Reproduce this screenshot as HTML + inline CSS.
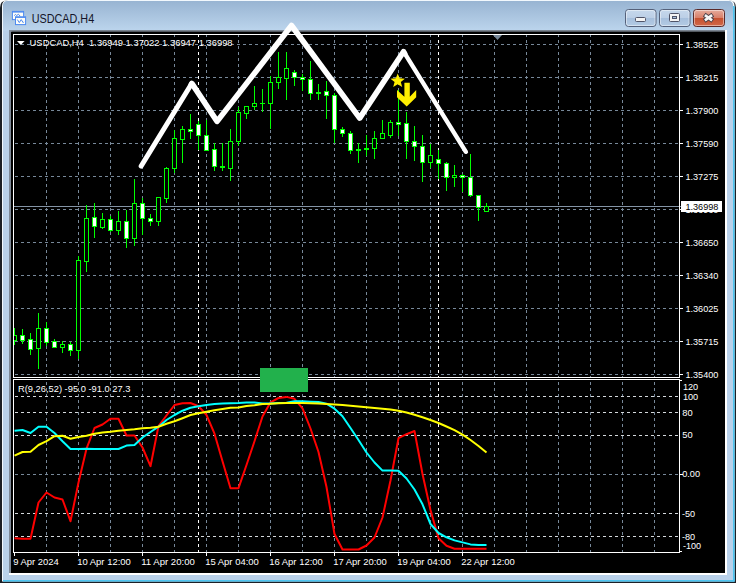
<!DOCTYPE html>
<html><head><meta charset="utf-8"><title>USDCAD,H4</title>
<style>
html,body{margin:0;padding:0;background:#fff;}
body{width:737px;height:583px;overflow:hidden;font-family:"Liberation Sans",sans-serif;}
svg{display:block}
text{font-family:"Liberation Sans",sans-serif;}
.t{font-size:9.8px;fill:#fff}
</style></head><body>
<svg width="737" height="583" viewBox="0 0 737 583">
<defs>
<linearGradient id="tb" gradientUnits="userSpaceOnUse" x1="0" y1="1" x2="0" y2="30"><stop offset="0" stop-color="#98b4d2"/><stop offset="1" stop-color="#bbd4ec"/></linearGradient>
<linearGradient id="bt" x1="0" y1="0" x2="0" y2="1"><stop offset="0" stop-color="#c6d8ec"/><stop offset="0.48" stop-color="#bccfe6"/><stop offset="0.5" stop-color="#a6bfdc"/><stop offset="1" stop-color="#b4cbe4"/></linearGradient>
<linearGradient id="cl" x1="0" y1="0" x2="0" y2="1"><stop offset="0" stop-color="#e6ae9f"/><stop offset="0.48" stop-color="#d9806a"/><stop offset="0.5" stop-color="#c5502f"/><stop offset="1" stop-color="#d2694a"/></linearGradient>
<linearGradient id="sh" x1="0" y1="0" x2="0" y2="1"><stop offset="0" stop-color="#8e9aa8"/><stop offset="1" stop-color="#1a1a1a"/></linearGradient>
<clipPath id="cm"><rect x="14" y="35" width="665" height="342"/></clipPath>
<clipPath id="ci"><rect x="14" y="380" width="665" height="172"/></clipPath>
</defs>

<rect x="0" y="0" width="737" height="583" fill="#fff"/>
<path d="M0 583 V7.5 Q0 0.5 7 0.5 H729 Q736 0.5 736 7.5 V583 Z" fill="#1c2026"/>
<path d="M2 581.6 V6 Q2 0 8 0 H728.6 Q734.6 0 734.6 6 V581.6 Z" fill="#f2f8fd"/>
<rect x="730" y="6" width="4.6" height="575.6" fill="#4cc4f0"/>
<rect x="3" y="577" width="731.6" height="4.6" fill="#4cc4f0"/>
<path d="M3 580 V6 Q3 1 8 1 H728 Q733 1 733 6 V580 Z" fill="#b9d1ea"/>
<path d="M3 31 V6 Q3 1 8 1 H728 Q733 1 733 6 V31 Z" fill="url(#tb)"/>
<rect x="9" y="30" width="718" height="545" fill="#fff"/>
<rect x="9" y="30" width="716" height="3" fill="url(#sh)"/>
<rect x="9" y="30" width="2.5" height="543" fill="#7d8896"/>
<rect x="11" y="32" width="714" height="541" fill="#000"/>
<rect x="12.4" y="11.4" width="11.2" height="8.2" fill="#fffef8" stroke="#4d8af0" stroke-width="1"/>
<rect x="12.4" y="11.4" width="11.2" height="1.2" fill="#4d8af0"/>
<polyline points="14.2,15.6 15.6,14.4 16.6,15.6 18.4,14.2 20.2,16.2" fill="none" stroke="#4d8af0" stroke-width="1"/>
<rect x="15.5" y="16.8" width="10.1" height="7.8" fill="#fffef8" stroke="#4d8af0" stroke-width="1"/>
<rect x="15.5" y="16.8" width="10.1" height="1.1" fill="#4d8af0"/>
<polyline points="17.4,19.6 19.3,22.6 21.2,19.6 23.2,22.6 23.8,21.8" fill="none" stroke="#4d8af0" stroke-width="1"/>
<text x="31.7" y="22.8" font-size="12" fill="#141428" textLength="62.5" lengthAdjust="spacingAndGlyphs">USDCAD,H4</text>
<rect x="625.5" y="9.5" width="30.5" height="17" rx="3" ry="3" fill="url(#bt)" stroke="#55617a" stroke-width="1"/>
<rect x="626.5" y="10.5" width="28.5" height="15" rx="2" ry="2" fill="none" stroke="#ffffff" stroke-opacity="0.45" stroke-width="1"/>
<rect x="659.5" y="9.5" width="30.5" height="17" rx="3" ry="3" fill="url(#bt)" stroke="#55617a" stroke-width="1"/>
<rect x="660.5" y="10.5" width="28.5" height="15" rx="2" ry="2" fill="none" stroke="#ffffff" stroke-opacity="0.45" stroke-width="1"/>
<rect x="693.5" y="9.5" width="31" height="17" rx="3" ry="3" fill="url(#cl)" stroke="#5a2a2a" stroke-width="1"/>
<rect x="694.5" y="10.5" width="29" height="15" rx="2" ry="2" fill="none" stroke="#ffffff" stroke-opacity="0.45" stroke-width="1"/>
<rect x="635.5" y="17.5" width="10" height="4" rx="1" fill="#f4f4f4" stroke="#505468" stroke-width="1"/>
<rect x="669.5" y="13.5" width="10" height="8" rx="1" fill="#f4f4f4" stroke="#505468" stroke-width="1"/>
<rect x="672.5" y="16.5" width="4" height="2" fill="#a9c1de" stroke="#505468" stroke-width="1"/>
<path d="M704.2 14.6 L712.8 20.8 M712.8 14.6 L704.2 20.8" stroke="#4a4048" stroke-width="4.6" stroke-linecap="butt" fill="none"/>
<path d="M704.9 15.1 L712.1 20.3 M712.1 15.1 L704.9 20.3" stroke="#f6f6f6" stroke-width="2.7" stroke-linecap="butt" fill="none"/>
<g shape-rendering="crispEdges">
<line x1="15" y1="44.5" x2="679" y2="44.5" stroke="#778899" stroke-width="1" stroke-dasharray="3 3"/>
<line x1="15" y1="77.5" x2="679" y2="77.5" stroke="#778899" stroke-width="1" stroke-dasharray="3 3"/>
<line x1="15" y1="110.5" x2="679" y2="110.5" stroke="#778899" stroke-width="1" stroke-dasharray="3 3"/>
<line x1="15" y1="143.5" x2="679" y2="143.5" stroke="#778899" stroke-width="1" stroke-dasharray="3 3"/>
<line x1="15" y1="176.5" x2="679" y2="176.5" stroke="#778899" stroke-width="1" stroke-dasharray="3 3"/>
<line x1="15" y1="209.5" x2="679" y2="209.5" stroke="#778899" stroke-width="1" stroke-dasharray="3 3"/>
<line x1="15" y1="242.5" x2="679" y2="242.5" stroke="#778899" stroke-width="1" stroke-dasharray="3 3"/>
<line x1="15" y1="275.5" x2="679" y2="275.5" stroke="#778899" stroke-width="1" stroke-dasharray="3 3"/>
<line x1="15" y1="308.5" x2="679" y2="308.5" stroke="#778899" stroke-width="1" stroke-dasharray="3 3"/>
<line x1="15" y1="341.5" x2="679" y2="341.5" stroke="#778899" stroke-width="1" stroke-dasharray="3 3"/>
<line x1="15" y1="374.5" x2="679" y2="374.5" stroke="#778899" stroke-width="1" stroke-dasharray="3 3"/>
<line x1="46.5" y1="34" x2="46.5" y2="377" stroke="#778899" stroke-width="1" stroke-dasharray="3 3" stroke-dashoffset="0"/>
<line x1="46.5" y1="382" x2="46.5" y2="552" stroke="#778899" stroke-width="1" stroke-dasharray="3 3" stroke-dashoffset="0"/>
<line x1="78.5" y1="34" x2="78.5" y2="377" stroke="#778899" stroke-width="1" stroke-dasharray="3 3" stroke-dashoffset="0"/>
<line x1="78.5" y1="382" x2="78.5" y2="552" stroke="#778899" stroke-width="1" stroke-dasharray="3 3" stroke-dashoffset="0"/>
<line x1="110.5" y1="34" x2="110.5" y2="377" stroke="#778899" stroke-width="1" stroke-dasharray="3 3" stroke-dashoffset="0"/>
<line x1="110.5" y1="382" x2="110.5" y2="552" stroke="#778899" stroke-width="1" stroke-dasharray="3 3" stroke-dashoffset="0"/>
<line x1="142.5" y1="34" x2="142.5" y2="377" stroke="#778899" stroke-width="1" stroke-dasharray="3 3" stroke-dashoffset="0"/>
<line x1="142.5" y1="382" x2="142.5" y2="552" stroke="#778899" stroke-width="1" stroke-dasharray="3 3" stroke-dashoffset="0"/>
<line x1="174.5" y1="34" x2="174.5" y2="377" stroke="#778899" stroke-width="1" stroke-dasharray="3 3" stroke-dashoffset="0"/>
<line x1="174.5" y1="382" x2="174.5" y2="552" stroke="#778899" stroke-width="1" stroke-dasharray="3 3" stroke-dashoffset="0"/>
<line x1="206.5" y1="34" x2="206.5" y2="377" stroke="#778899" stroke-width="1" stroke-dasharray="3 3" stroke-dashoffset="0"/>
<line x1="206.5" y1="382" x2="206.5" y2="552" stroke="#778899" stroke-width="1" stroke-dasharray="3 3" stroke-dashoffset="0"/>
<line x1="238.5" y1="34" x2="238.5" y2="377" stroke="#778899" stroke-width="1" stroke-dasharray="3 3" stroke-dashoffset="0"/>
<line x1="238.5" y1="382" x2="238.5" y2="552" stroke="#778899" stroke-width="1" stroke-dasharray="3 3" stroke-dashoffset="0"/>
<line x1="270.5" y1="34" x2="270.5" y2="377" stroke="#778899" stroke-width="1" stroke-dasharray="3 3" stroke-dashoffset="0"/>
<line x1="270.5" y1="382" x2="270.5" y2="552" stroke="#778899" stroke-width="1" stroke-dasharray="3 3" stroke-dashoffset="0"/>
<line x1="302.5" y1="34" x2="302.5" y2="377" stroke="#778899" stroke-width="1" stroke-dasharray="3 3" stroke-dashoffset="0"/>
<line x1="302.5" y1="382" x2="302.5" y2="552" stroke="#778899" stroke-width="1" stroke-dasharray="3 3" stroke-dashoffset="0"/>
<line x1="334.5" y1="34" x2="334.5" y2="377" stroke="#778899" stroke-width="1" stroke-dasharray="3 3" stroke-dashoffset="0"/>
<line x1="334.5" y1="382" x2="334.5" y2="552" stroke="#778899" stroke-width="1" stroke-dasharray="3 3" stroke-dashoffset="0"/>
<line x1="366.5" y1="34" x2="366.5" y2="377" stroke="#778899" stroke-width="1" stroke-dasharray="3 3" stroke-dashoffset="0"/>
<line x1="366.5" y1="382" x2="366.5" y2="552" stroke="#778899" stroke-width="1" stroke-dasharray="3 3" stroke-dashoffset="0"/>
<line x1="398.5" y1="34" x2="398.5" y2="377" stroke="#778899" stroke-width="1" stroke-dasharray="3 3" stroke-dashoffset="0"/>
<line x1="398.5" y1="382" x2="398.5" y2="552" stroke="#778899" stroke-width="1" stroke-dasharray="3 3" stroke-dashoffset="0"/>
<line x1="430.5" y1="34" x2="430.5" y2="377" stroke="#778899" stroke-width="1" stroke-dasharray="3 3" stroke-dashoffset="0"/>
<line x1="430.5" y1="382" x2="430.5" y2="552" stroke="#778899" stroke-width="1" stroke-dasharray="3 3" stroke-dashoffset="0"/>
<line x1="462.5" y1="34" x2="462.5" y2="377" stroke="#778899" stroke-width="1" stroke-dasharray="3 3" stroke-dashoffset="0"/>
<line x1="462.5" y1="382" x2="462.5" y2="552" stroke="#778899" stroke-width="1" stroke-dasharray="3 3" stroke-dashoffset="0"/>
<line x1="494.5" y1="34" x2="494.5" y2="377" stroke="#778899" stroke-width="1" stroke-dasharray="3 3" stroke-dashoffset="0"/>
<line x1="494.5" y1="382" x2="494.5" y2="552" stroke="#778899" stroke-width="1" stroke-dasharray="3 3" stroke-dashoffset="0"/>
<line x1="526.5" y1="34" x2="526.5" y2="377" stroke="#778899" stroke-width="1" stroke-dasharray="3 3" stroke-dashoffset="0"/>
<line x1="526.5" y1="382" x2="526.5" y2="552" stroke="#778899" stroke-width="1" stroke-dasharray="3 3" stroke-dashoffset="0"/>
<line x1="558.5" y1="34" x2="558.5" y2="377" stroke="#778899" stroke-width="1" stroke-dasharray="3 3" stroke-dashoffset="0"/>
<line x1="558.5" y1="382" x2="558.5" y2="552" stroke="#778899" stroke-width="1" stroke-dasharray="3 3" stroke-dashoffset="0"/>
<line x1="590.5" y1="34" x2="590.5" y2="377" stroke="#778899" stroke-width="1" stroke-dasharray="3 3" stroke-dashoffset="0"/>
<line x1="590.5" y1="382" x2="590.5" y2="552" stroke="#778899" stroke-width="1" stroke-dasharray="3 3" stroke-dashoffset="0"/>
<line x1="622.5" y1="34" x2="622.5" y2="377" stroke="#778899" stroke-width="1" stroke-dasharray="3 3" stroke-dashoffset="0"/>
<line x1="622.5" y1="382" x2="622.5" y2="552" stroke="#778899" stroke-width="1" stroke-dasharray="3 3" stroke-dashoffset="0"/>
<line x1="654.5" y1="34" x2="654.5" y2="377" stroke="#778899" stroke-width="1" stroke-dasharray="3 3" stroke-dashoffset="0"/>
<line x1="654.5" y1="382" x2="654.5" y2="552" stroke="#778899" stroke-width="1" stroke-dasharray="3 3" stroke-dashoffset="0"/>
<line x1="198.5" y1="34" x2="198.5" y2="377" stroke="#fff" stroke-width="1" stroke-dasharray="3 3"/>
<line x1="198.5" y1="382" x2="198.5" y2="552" stroke="#fff" stroke-width="1" stroke-dasharray="3 3"/>
<line x1="438.5" y1="34" x2="438.5" y2="377" stroke="#fff" stroke-width="1" stroke-dasharray="3 3"/>
<line x1="438.5" y1="382" x2="438.5" y2="552" stroke="#fff" stroke-width="1" stroke-dasharray="3 3"/>
<line x1="15" y1="474.5" x2="679" y2="474.5" stroke="#778899" stroke-width="1" stroke-dasharray="3 3"/>
<line x1="680" y1="474.5" x2="683" y2="474.5" stroke="#fff"/>
<line x1="15" y1="396.5" x2="679" y2="396.5" stroke="#d4d8dc" stroke-width="1" stroke-dasharray="3 3"/>
<line x1="15" y1="412.5" x2="679" y2="412.5" stroke="#d4d8dc" stroke-width="1" stroke-dasharray="3 3"/>
<line x1="15" y1="435.5" x2="679" y2="435.5" stroke="#d4d8dc" stroke-width="1" stroke-dasharray="3 3"/>
<line x1="15" y1="513.5" x2="679" y2="513.5" stroke="#d4d8dc" stroke-width="1" stroke-dasharray="3 3"/>
<line x1="15" y1="536.5" x2="679" y2="536.5" stroke="#d4d8dc" stroke-width="1" stroke-dasharray="3 3"/>
<line x1="14" y1="206.5" x2="681" y2="206.5" stroke="#8494a6" stroke-width="1"/>
<rect x="13.5" y="34.5" width="666" height="343" fill="none" stroke="#fff" stroke-width="1"/>
<rect x="13.5" y="379.5" width="666" height="173" fill="none" stroke="#fff" stroke-width="1"/>
<line x1="680" y1="44.5" x2="683" y2="44.5" stroke="#fff" stroke-width="1"/>
<line x1="680" y1="77.5" x2="683" y2="77.5" stroke="#fff" stroke-width="1"/>
<line x1="680" y1="110.5" x2="683" y2="110.5" stroke="#fff" stroke-width="1"/>
<line x1="680" y1="143.5" x2="683" y2="143.5" stroke="#fff" stroke-width="1"/>
<line x1="680" y1="176.5" x2="683" y2="176.5" stroke="#fff" stroke-width="1"/>
<line x1="680" y1="209.5" x2="683" y2="209.5" stroke="#fff" stroke-width="1"/>
<line x1="680" y1="242.5" x2="683" y2="242.5" stroke="#fff" stroke-width="1"/>
<line x1="680" y1="275.5" x2="683" y2="275.5" stroke="#fff" stroke-width="1"/>
<line x1="680" y1="308.5" x2="683" y2="308.5" stroke="#fff" stroke-width="1"/>
<line x1="680" y1="341.5" x2="683" y2="341.5" stroke="#fff" stroke-width="1"/>
<line x1="680" y1="374.5" x2="683" y2="374.5" stroke="#fff" stroke-width="1"/>
<line x1="680" y1="380.5" x2="682" y2="380.5" stroke="#fff"/>
<line x1="680" y1="551.5" x2="682" y2="551.5" stroke="#fff"/>
<line x1="14.5" y1="553" x2="14.5" y2="556" stroke="#fff" stroke-width="1"/>
<line x1="78.5" y1="553" x2="78.5" y2="556" stroke="#fff" stroke-width="1"/>
<line x1="142.5" y1="553" x2="142.5" y2="556" stroke="#fff" stroke-width="1"/>
<line x1="206.5" y1="553" x2="206.5" y2="556" stroke="#fff" stroke-width="1"/>
<line x1="270.5" y1="553" x2="270.5" y2="556" stroke="#fff" stroke-width="1"/>
<line x1="334.5" y1="553" x2="334.5" y2="556" stroke="#fff" stroke-width="1"/>
<line x1="398.5" y1="553" x2="398.5" y2="556" stroke="#fff" stroke-width="1"/>
<line x1="462.5" y1="553" x2="462.5" y2="556" stroke="#fff" stroke-width="1"/>
<g clip-path="url(#cm)">
<rect x="14" y="328" width="1" height="17" fill="#00ff00"/>
<rect x="12" y="335" width="5" height="6" fill="#00ff00"/>
<rect x="13" y="336" width="3" height="4" fill="#000"/>
<rect x="22" y="329" width="1" height="15" fill="#00ff00"/>
<rect x="20" y="335" width="5" height="6" fill="#00ff00"/>
<rect x="21" y="336" width="3" height="4" fill="#fff"/>
<rect x="30" y="333" width="1" height="22" fill="#00ff00"/>
<rect x="28" y="339" width="5" height="11" fill="#00ff00"/>
<rect x="29" y="340" width="3" height="9" fill="#fff"/>
<rect x="38" y="313" width="1" height="56" fill="#00ff00"/>
<rect x="36" y="328" width="5" height="21" fill="#00ff00"/>
<rect x="37" y="329" width="3" height="19" fill="#000"/>
<rect x="46" y="322" width="1" height="24" fill="#00ff00"/>
<rect x="44" y="328" width="5" height="15" fill="#00ff00"/>
<rect x="45" y="329" width="3" height="13" fill="#fff"/>
<rect x="54" y="339" width="1" height="9" fill="#00ff00"/>
<rect x="52" y="341" width="5" height="7" fill="#00ff00"/>
<rect x="53" y="342" width="3" height="5" fill="#fff"/>
<rect x="62" y="341" width="1" height="12" fill="#00ff00"/>
<rect x="60" y="344" width="5" height="4" fill="#00ff00"/>
<rect x="61" y="345" width="3" height="2" fill="#000"/>
<rect x="70" y="342" width="1" height="14" fill="#00ff00"/>
<rect x="68" y="344" width="5" height="7" fill="#00ff00"/>
<rect x="69" y="345" width="3" height="5" fill="#fff"/>
<rect x="78" y="256" width="1" height="103" fill="#00ff00"/>
<rect x="76" y="260" width="5" height="91" fill="#00ff00"/>
<rect x="77" y="261" width="3" height="89" fill="#000"/>
<rect x="86" y="205" width="1" height="67" fill="#00ff00"/>
<rect x="84" y="218" width="5" height="44" fill="#00ff00"/>
<rect x="85" y="219" width="3" height="42" fill="#000"/>
<rect x="94" y="203" width="1" height="35" fill="#00ff00"/>
<rect x="92" y="217" width="5" height="10" fill="#00ff00"/>
<rect x="93" y="218" width="3" height="8" fill="#fff"/>
<rect x="102" y="213" width="1" height="16" fill="#00ff00"/>
<rect x="100" y="219" width="5" height="9" fill="#00ff00"/>
<rect x="101" y="220" width="3" height="7" fill="#000"/>
<rect x="110" y="216" width="1" height="16" fill="#00ff00"/>
<rect x="108" y="219" width="5" height="12" fill="#00ff00"/>
<rect x="109" y="220" width="3" height="10" fill="#fff"/>
<rect x="118" y="211" width="1" height="24" fill="#00ff00"/>
<rect x="116" y="221" width="5" height="10" fill="#00ff00"/>
<rect x="117" y="222" width="3" height="8" fill="#000"/>
<rect x="126" y="210" width="1" height="38" fill="#00ff00"/>
<rect x="124" y="221" width="5" height="18" fill="#00ff00"/>
<rect x="125" y="222" width="3" height="16" fill="#fff"/>
<rect x="134" y="179" width="1" height="67" fill="#00ff00"/>
<rect x="132" y="203" width="5" height="36" fill="#00ff00"/>
<rect x="133" y="204" width="3" height="34" fill="#000"/>
<rect x="142" y="198" width="1" height="37" fill="#00ff00"/>
<rect x="140" y="203" width="5" height="16" fill="#00ff00"/>
<rect x="141" y="204" width="3" height="14" fill="#fff"/>
<rect x="150" y="214" width="1" height="12" fill="#00ff00"/>
<rect x="148" y="218" width="5" height="4" fill="#00ff00"/>
<rect x="149" y="219" width="3" height="2" fill="#fff"/>
<rect x="158" y="197" width="1" height="29" fill="#00ff00"/>
<rect x="156" y="197" width="5" height="25" fill="#00ff00"/>
<rect x="157" y="198" width="3" height="23" fill="#000"/>
<rect x="166" y="167" width="1" height="36" fill="#00ff00"/>
<rect x="164" y="168" width="5" height="31" fill="#00ff00"/>
<rect x="165" y="169" width="3" height="29" fill="#000"/>
<rect x="174" y="130" width="1" height="43" fill="#00ff00"/>
<rect x="172" y="138" width="5" height="31" fill="#00ff00"/>
<rect x="173" y="139" width="3" height="29" fill="#000"/>
<rect x="182" y="126" width="1" height="37" fill="#00ff00"/>
<rect x="180" y="129" width="5" height="11" fill="#00ff00"/>
<rect x="181" y="130" width="3" height="9" fill="#000"/>
<rect x="190" y="114" width="1" height="25" fill="#00ff00"/>
<rect x="188" y="129" width="5" height="3" fill="#00ff00"/>
<rect x="189" y="130" width="3" height="1" fill="#fff"/>
<rect x="198" y="121" width="1" height="29" fill="#00ff00"/>
<rect x="196" y="124" width="5" height="12" fill="#00ff00"/>
<rect x="197" y="125" width="3" height="10" fill="#fff"/>
<rect x="206" y="120" width="1" height="30" fill="#00ff00"/>
<rect x="204" y="135" width="5" height="16" fill="#00ff00"/>
<rect x="205" y="136" width="3" height="14" fill="#fff"/>
<rect x="214" y="143" width="1" height="28" fill="#00ff00"/>
<rect x="212" y="149" width="5" height="18" fill="#00ff00"/>
<rect x="213" y="150" width="3" height="16" fill="#fff"/>
<rect x="222" y="143" width="1" height="28" fill="#00ff00"/>
<rect x="220" y="166" width="5" height="2" fill="#00ff00"/>
<rect x="230" y="129" width="1" height="52" fill="#00ff00"/>
<rect x="228" y="141" width="5" height="28" fill="#00ff00"/>
<rect x="229" y="142" width="3" height="26" fill="#000"/>
<rect x="238" y="107" width="1" height="39" fill="#00ff00"/>
<rect x="236" y="112" width="5" height="30" fill="#00ff00"/>
<rect x="237" y="113" width="3" height="28" fill="#000"/>
<rect x="246" y="106" width="1" height="13" fill="#00ff00"/>
<rect x="244" y="106" width="5" height="8" fill="#00ff00"/>
<rect x="245" y="107" width="3" height="6" fill="#000"/>
<rect x="254" y="86" width="1" height="24" fill="#00ff00"/>
<rect x="252" y="103" width="5" height="4" fill="#00ff00"/>
<rect x="253" y="104" width="3" height="2" fill="#000"/>
<rect x="262" y="89" width="1" height="23" fill="#00ff00"/>
<rect x="260" y="103" width="5" height="1" fill="#00ff00"/>
<rect x="270" y="76" width="1" height="53" fill="#00ff00"/>
<rect x="268" y="82" width="5" height="22" fill="#00ff00"/>
<rect x="269" y="83" width="3" height="20" fill="#000"/>
<rect x="278" y="52" width="1" height="37" fill="#00ff00"/>
<rect x="276" y="77" width="5" height="6" fill="#00ff00"/>
<rect x="277" y="78" width="3" height="4" fill="#000"/>
<rect x="286" y="52" width="1" height="48" fill="#00ff00"/>
<rect x="284" y="68" width="5" height="11" fill="#00ff00"/>
<rect x="285" y="69" width="3" height="9" fill="#000"/>
<rect x="294" y="70" width="1" height="16" fill="#00ff00"/>
<rect x="292" y="72" width="5" height="6" fill="#00ff00"/>
<rect x="293" y="73" width="3" height="4" fill="#fff"/>
<rect x="302" y="74" width="1" height="17" fill="#00ff00"/>
<rect x="300" y="77" width="5" height="3" fill="#00ff00"/>
<rect x="301" y="78" width="3" height="1" fill="#fff"/>
<rect x="310" y="61" width="1" height="39" fill="#00ff00"/>
<rect x="308" y="79" width="5" height="15" fill="#00ff00"/>
<rect x="309" y="80" width="3" height="13" fill="#fff"/>
<rect x="318" y="84" width="1" height="16" fill="#00ff00"/>
<rect x="316" y="92" width="5" height="2" fill="#00ff00"/>
<rect x="326" y="81" width="1" height="38" fill="#00ff00"/>
<rect x="324" y="91" width="5" height="5" fill="#00ff00"/>
<rect x="325" y="92" width="3" height="3" fill="#fff"/>
<rect x="334" y="93" width="1" height="50" fill="#00ff00"/>
<rect x="332" y="95" width="5" height="35" fill="#00ff00"/>
<rect x="333" y="96" width="3" height="33" fill="#fff"/>
<rect x="342" y="127" width="1" height="10" fill="#00ff00"/>
<rect x="340" y="129" width="5" height="5" fill="#00ff00"/>
<rect x="341" y="130" width="3" height="3" fill="#fff"/>
<rect x="350" y="131" width="1" height="23" fill="#00ff00"/>
<rect x="348" y="133" width="5" height="18" fill="#00ff00"/>
<rect x="349" y="134" width="3" height="16" fill="#fff"/>
<rect x="358" y="143" width="1" height="20" fill="#00ff00"/>
<rect x="356" y="149" width="5" height="2" fill="#00ff00"/>
<rect x="366" y="135" width="1" height="21" fill="#00ff00"/>
<rect x="364" y="148" width="5" height="2" fill="#00ff00"/>
<rect x="374" y="131" width="1" height="28" fill="#00ff00"/>
<rect x="372" y="138" width="5" height="11" fill="#00ff00"/>
<rect x="373" y="139" width="3" height="9" fill="#000"/>
<rect x="382" y="120" width="1" height="18" fill="#00ff00"/>
<rect x="380" y="133" width="5" height="6" fill="#00ff00"/>
<rect x="381" y="134" width="3" height="4" fill="#000"/>
<rect x="390" y="120" width="1" height="18" fill="#00ff00"/>
<rect x="388" y="122" width="5" height="14" fill="#00ff00"/>
<rect x="389" y="123" width="3" height="12" fill="#000"/>
<rect x="398" y="90" width="1" height="46" fill="#00ff00"/>
<rect x="396" y="122" width="5" height="3" fill="#00ff00"/>
<rect x="397" y="123" width="3" height="1" fill="#fff"/>
<rect x="406" y="112" width="1" height="47" fill="#00ff00"/>
<rect x="404" y="123" width="5" height="19" fill="#00ff00"/>
<rect x="405" y="124" width="3" height="17" fill="#fff"/>
<rect x="414" y="126" width="1" height="35" fill="#00ff00"/>
<rect x="412" y="141" width="5" height="6" fill="#00ff00"/>
<rect x="413" y="142" width="3" height="4" fill="#fff"/>
<rect x="422" y="135" width="1" height="47" fill="#00ff00"/>
<rect x="420" y="146" width="5" height="17" fill="#00ff00"/>
<rect x="421" y="147" width="3" height="15" fill="#fff"/>
<rect x="430" y="144" width="1" height="24" fill="#00ff00"/>
<rect x="428" y="155" width="5" height="8" fill="#00ff00"/>
<rect x="429" y="156" width="3" height="6" fill="#000"/>
<rect x="438" y="150" width="1" height="29" fill="#00ff00"/>
<rect x="436" y="159" width="5" height="5" fill="#00ff00"/>
<rect x="437" y="160" width="3" height="3" fill="#fff"/>
<rect x="446" y="162" width="1" height="29" fill="#00ff00"/>
<rect x="444" y="163" width="5" height="15" fill="#00ff00"/>
<rect x="445" y="164" width="3" height="13" fill="#fff"/>
<rect x="454" y="165" width="1" height="22" fill="#00ff00"/>
<rect x="452" y="175" width="5" height="3" fill="#00ff00"/>
<rect x="453" y="176" width="3" height="1" fill="#000"/>
<rect x="462" y="174" width="1" height="18" fill="#00ff00"/>
<rect x="460" y="175" width="5" height="3" fill="#00ff00"/>
<rect x="461" y="176" width="3" height="1" fill="#fff"/>
<rect x="470" y="154" width="1" height="43" fill="#00ff00"/>
<rect x="468" y="177" width="5" height="19" fill="#00ff00"/>
<rect x="469" y="178" width="3" height="17" fill="#fff"/>
<rect x="478" y="195" width="1" height="26" fill="#00ff00"/>
<rect x="476" y="195" width="5" height="13" fill="#00ff00"/>
<rect x="477" y="196" width="3" height="11" fill="#fff"/>
<rect x="486" y="203" width="1" height="9" fill="#00ff00"/>
<rect x="484" y="206" width="5" height="6" fill="#00ff00"/>
<rect x="485" y="207" width="3" height="4" fill="#000"/>
</g>
</g>
<polygon points="493,35 502,35 497.5,40" fill="#778899"/>
<polyline points="14.5,538.2 22.5,538.7 30.5,538.7 38.5,502.5 46.5,492.5 54.5,497.5 62.5,499.5 70.5,521.2 78.5,482.5 86.5,448.7 94.5,428 102.5,424.5 110.5,418.7 118.5,418.7 126.5,435.5 134.5,435.5 142.5,447.5 150.5,466.2 158.5,426 166.5,415.5 174.5,405 182.5,403.2 190.5,403 198.5,406.2 206.5,415 214.5,433.7 222.5,461.2 230.5,488.2 238.5,488.2 246.5,465 254.5,441.2 262.5,416.5 270.5,402.3 278.5,398 286.5,396.9 294.5,398.8 302.5,408.3 310.5,428.5 318.5,452 326.5,487 334.5,534 342.5,549.5 350.5,549.5 358.5,549.5 366.5,545.5 374.5,537.5 382.5,517.5 390.5,480.5 398.5,438.2 406.5,434.2 414.5,431 422.5,474 430.5,510 438.5,538.2 446.5,545.8 454.5,548.8 462.5,548.8 470.5,548.8 478.5,548.8 486.5,548.8" fill="none" stroke="#ff0000" stroke-width="2" stroke-linejoin="round" clip-path="url(#ci)"/>
<polyline points="14.5,430.7 22.5,430 30.5,433 38.5,426.7 46.5,426.7 54.5,433 62.5,441.2 70.5,449 78.5,449 86.5,448.8 94.5,449 102.5,449 110.5,449 118.5,449 126.5,445.6 134.5,445 142.5,437.5 150.5,432 158.5,426.7 166.5,420 174.5,415 182.5,410.7 190.5,407.8 198.5,406.2 206.5,405 214.5,404 222.5,403.5 230.5,403.2 238.5,403 246.5,402.5 254.5,402.6 262.5,403.6 270.5,403.5 278.5,403 286.5,402.7 294.5,401.3 302.5,401.3 310.5,401.7 318.5,402 326.5,403.7 334.5,408.7 342.5,416.2 350.5,428 358.5,440 366.5,452.5 374.5,462.5 382.5,470.6 390.5,470.6 398.5,470.7 406.5,478.5 414.5,489.5 422.5,504.3 430.5,524 438.5,533 446.5,537.3 454.5,540.4 462.5,542.4 470.5,544.4 478.5,544.9 486.5,544.9" fill="none" stroke="#00ffff" stroke-width="2" stroke-linejoin="round" clip-path="url(#ci)"/>
<polyline points="14.5,455.7 22.5,452 30.5,451.7 38.5,445 46.5,441.2 54.5,436.2 62.5,435.7 70.5,438.7 78.5,437 86.5,435.7 94.5,433.7 102.5,432.5 110.5,431.7 118.5,430.7 126.5,430 134.5,429.2 142.5,428.2 150.5,427.7 158.5,426.7 166.5,423.7 174.5,421.2 182.5,418.2 190.5,415 198.5,413.2 206.5,411.7 214.5,410.2 222.5,409 230.5,407.7 238.5,407.6 246.5,406 254.5,405.2 262.5,403.9 270.5,403.8 278.5,403.3 286.5,403 294.5,403 302.5,403.1 310.5,403.2 318.5,403.5 326.5,404 334.5,404.5 342.5,405 350.5,405.7 358.5,406.5 366.5,407.3 374.5,408 382.5,408.7 390.5,409.5 398.5,410.7 406.5,412.5 414.5,414.7 422.5,417.2 430.5,420 438.5,423 446.5,426.5 454.5,430.2 462.5,434.7 470.5,440 478.5,446 486.5,452.5" fill="none" stroke="#ffff00" stroke-width="2" stroke-linejoin="round" clip-path="url(#ci)"/>
<path d="M17 41 L24.6 41 L20.8 45 Z" fill="#fff"/>
<text class="t" x="29.6" y="46" textLength="203" lengthAdjust="spacingAndGlyphs" style="white-space:pre">USDCAD,H4  1.36949 1.37022 1.36947 1.36998</text>
<text class="t" x="685.4" y="47.9" textLength="33" lengthAdjust="spacingAndGlyphs">1.38525</text>
<text class="t" x="685.4" y="80.9" textLength="33" lengthAdjust="spacingAndGlyphs">1.38215</text>
<text class="t" x="685.4" y="113.9" textLength="33" lengthAdjust="spacingAndGlyphs">1.37900</text>
<text class="t" x="685.4" y="146.9" textLength="33" lengthAdjust="spacingAndGlyphs">1.37590</text>
<text class="t" x="685.4" y="179.9" textLength="33" lengthAdjust="spacingAndGlyphs">1.37275</text>
<text class="t" x="685.4" y="245.9" textLength="33" lengthAdjust="spacingAndGlyphs">1.36650</text>
<text class="t" x="685.4" y="278.9" textLength="33" lengthAdjust="spacingAndGlyphs">1.36340</text>
<text class="t" x="685.4" y="311.9" textLength="33" lengthAdjust="spacingAndGlyphs">1.36025</text>
<text class="t" x="685.4" y="344.9" textLength="33" lengthAdjust="spacingAndGlyphs">1.35715</text>
<text class="t" x="685.4" y="377.9" textLength="33" lengthAdjust="spacingAndGlyphs">1.35400</text>
<text class="t" x="685.4" y="212.9" textLength="33" lengthAdjust="spacingAndGlyphs">1.36960</text>
<rect x="681" y="201" width="41" height="11" fill="#fff"/>
<text class="t" x="685.4" y="209.9" style="fill:#000" textLength="33" lengthAdjust="spacingAndGlyphs">1.36998</text>
<text class="t" x="18" y="391.9" textLength="112.4" lengthAdjust="spacingAndGlyphs">R(9,26,52) -95.0 -91.0 27.3</text>
<text class="t" x="682.9" y="389.7" textLength="15.3" lengthAdjust="spacingAndGlyphs">120</text>
<text class="t" x="682.9" y="399.7" textLength="15.3" lengthAdjust="spacingAndGlyphs">100</text>
<text class="t" x="682.2" y="415.6" textLength="10.4" lengthAdjust="spacingAndGlyphs">80</text>
<text class="t" x="682.2" y="438.4" textLength="10.4" lengthAdjust="spacingAndGlyphs">50</text>
<text class="t" x="682.2" y="477.3" textLength="17.9" lengthAdjust="spacingAndGlyphs">0.00</text>
<text class="t" x="682.0" y="516.9" textLength="13.2" lengthAdjust="spacingAndGlyphs">-50</text>
<text class="t" x="682.0" y="539.7" textLength="13.2" lengthAdjust="spacingAndGlyphs">-80</text>
<text class="t" x="682.9" y="548.6" textLength="18.1" lengthAdjust="spacingAndGlyphs">-100</text>
<text class="t" x="13.2" y="564.6" textLength="45.6" lengthAdjust="spacingAndGlyphs">9 Apr 2024</text>
<text class="t" x="77.2" y="564.6" textLength="53.6" lengthAdjust="spacingAndGlyphs">10 Apr 12:00</text>
<text class="t" x="141.2" y="564.6" textLength="53.6" lengthAdjust="spacingAndGlyphs">11 Apr 20:00</text>
<text class="t" x="205.2" y="564.6" textLength="53.6" lengthAdjust="spacingAndGlyphs">15 Apr 04:00</text>
<text class="t" x="269.2" y="564.6" textLength="53.6" lengthAdjust="spacingAndGlyphs">16 Apr 12:00</text>
<text class="t" x="333.2" y="564.6" textLength="53.6" lengthAdjust="spacingAndGlyphs">17 Apr 20:00</text>
<text class="t" x="397.2" y="564.6" textLength="53.6" lengthAdjust="spacingAndGlyphs">19 Apr 04:00</text>
<text class="t" x="461.2" y="564.6" textLength="53.6" lengthAdjust="spacingAndGlyphs">22 Apr 12:00</text>
<rect x="260" y="368" width="48" height="24" fill="#22b14c"/>
<line x1="141.2" y1="166" x2="191.6" y2="83.8" stroke="#fff" stroke-width="5" stroke-linecap="round"/>
<polyline points="191.3,84.4 191.8,83.4 217.1,121.4 291.5,25.5 359.7,118.1 403.5,51.7 404.6,53.4" fill="none" stroke="#fff" stroke-width="5.6" stroke-linecap="round" stroke-linejoin="round"/>
<line x1="404.4" y1="52.8" x2="465.9" y2="151.8" stroke="#fff" stroke-width="4.4" stroke-linecap="round"/>
<polygon points="397.7,73.4 399.6,78.3 404.9,78.7 400.8,82.0 402.2,87.1 397.7,84.3 393.2,87.1 394.6,82.0 390.5,78.7 395.8,78.3" fill="#ffee00"/>
<polygon points="404.4,82.8 409.8,82.8 409.8,96.7 416.2,90 416.2,97.2 406.7,106.4 397,97.2 397,90 404.4,96.7" fill="#ffee00"/>
</svg></body></html>
